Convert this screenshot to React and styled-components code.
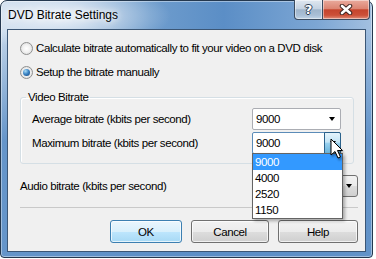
import React from 'react';
import styled, { createGlobalStyle } from 'styled-components';

const GlobalStyle = createGlobalStyle`
  html, body {
    margin: 0;
    padding: 0;
    background: #ffffff;
  }
  body {
    font-family: "Liberation Sans", Arial, sans-serif;
  }
`;

// Window frame
const Window = styled.div`
  box-sizing: border-box;
  width: 373px;
  height: 258px;
  display: flex;
  flex-direction: column;
  padding: 0 6px 5px 6px;
  border: 1px solid #24384f;
  border-radius: 7px 7px 4px 4px;
  background:
    radial-gradient(ellipse 110px 34px at 60px 15px, rgba(255, 255, 255, 0.8), rgba(255, 255, 255, 0) 100%),
    linear-gradient(180deg, rgba(91, 142, 198, 0) 0px, rgba(91, 142, 198, 0) 30px, rgba(91, 142, 198, 0.9) 140px),
    linear-gradient(90deg, #c3d6ea 0%, #a2bfde 18%, #6f9dcd 40%, #5b8ec6 60%, #7ca6d4 85%, #a3c0e0 100%);
  box-shadow: inset 0 0 0 1px rgba(255, 255, 255, 0.4);
`;

const TitleBar = styled.div`
  height: 28px;
  flex-shrink: 0;
  display: flex;
  align-items: flex-start;
`;

const Title = styled.span`
  margin: 7px 0 0 1px;
  font-size: 12px;
  color: #000;
  text-shadow: 0 0 6px #fff, 0 0 10px rgba(255, 255, 255, 0.8);
`;

const CaptionButtons = styled.div`
  margin: -1px -4px 0 auto;
  display: flex;
`;

const CaptionButton = styled.div`
  box-sizing: border-box;
  width: ${p => p.$w}px;
  height: 20px;
  display: flex;
  align-items: center;
  justify-content: center;
  border: 1px solid #3a4b60;
  border-top: none;
  border-left: ${p => (p.$close ? 'none' : '1px solid #3a4b60')};
  border-radius: ${p => (p.$close ? '0 0 4px 0' : '0 0 0 4px')};
  background: ${p =>
    p.$close
      ? 'linear-gradient(180deg, #e9aa9d 0%, #dc8573 45%, #c5442d 52%, #cc5038 80%, #e08e7a 100%)'
      : 'linear-gradient(180deg, #dfe7f0 0%, #c5d3e2 45%, #9fb5cb 52%, #a9bfd6 80%, #c2d4e6 100%)'};
  box-shadow: inset 0 0 0 1px rgba(255, 255, 255, 0.45);
`;

const HelpGlyph = styled.span`
  font-family: "DejaVu Sans", sans-serif;
  font-weight: bold;
  font-size: 13px;
  line-height: 1;
  color: #fff;
  text-shadow: -1px 0 #2c3e55, 1px 0 #2c3e55, 0 -1px #2c3e55, 0 1px #2c3e55;
`;

// Client area
const Client = styled.div`
  flex: 1;
  display: flex;
  flex-direction: column;
  border: 1px solid #3b5675;
  background: #f0f0f0;
  padding: 10px 7px 0 12px;
  font-size: 11.5px;
  letter-spacing: -0.4px;
  color: #000;
`;

const RadioRow = styled.label`
  height: 16px;
  display: flex;
  align-items: center;
  gap: 3px;
  & + & {
    margin-top: 8px;
  }
`;

const Radio = styled.span`
  box-sizing: border-box;
  width: 13px;
  height: 13px;
  border-radius: 50%;
  border: 1px solid #8e8f8f;
  background: radial-gradient(circle at 50% 50%, #ffffff 0%, #f2f2f2 45%, #d2d2d2 100%);
  display: flex;
  align-items: center;
  justify-content: center;
  &::after {
    content: '';
    width: 7px;
    height: 7px;
    border-radius: 50%;
    background: ${p =>
      p.$checked
        ? 'radial-gradient(circle at 35% 30%, #a9ddf7 0%, #3d86c6 45%, #0f3f78 100%)'
        : 'transparent'};
  }
`;

const Group = styled.fieldset`
  margin: 10px 4px 0 0;
  padding: 4px 12px 9px 11px;
  border: 1px solid #d5dfe5;
  border-radius: 3px;
  display: flex;
  flex-direction: column;
  gap: 2px;
  box-shadow: inset 1px 1px 0 #fff;
`;

const Legend = styled.legend`
  margin-left: -6px;
  padding: 0 2px;
  line-height: 14px;
`;

const FieldRow = styled.div`
  height: 22px;
  display: flex;
  align-items: center;
  justify-content: space-between;
  margin-top: ${p => p.$mt || 0}px;
`;

const Combo = styled.div`
  position: relative;
  box-sizing: border-box;
  width: 89px;
  height: 22px;
  display: flex;
  align-items: stretch;
  border: 1px solid ${p => (p.$focused ? '#5b8cb8' : p.$button ? '#707070' : '#abadb3')};
  border-radius: ${p => (p.$button ? '3px' : '2px')};
  background: ${p =>
    p.$button ? 'linear-gradient(180deg, #f2f2f2 0%, #ebebeb 50%, #dddddd 51%, #cfcfcf 100%)' : '#fff'};
`;

const ComboText = styled.span`
  flex: 1;
  display: flex;
  align-items: center;
  padding-left: 3px;
`;

const DropButton = styled.span`
  box-sizing: border-box;
  width: 17px;
  display: flex;
  align-items: center;
  justify-content: center;
  margin: ${p => (p.$pressed ? '-1px -1px -1px 0' : '0')};
  border: ${p => (p.$pressed ? '1px solid #2c628b' : 'none')};
  border-radius: ${p => (p.$pressed ? '0 2px 2px 0' : '0')};
  background: ${p =>
    p.$pressed
      ? 'linear-gradient(180deg, #e5f4fc 0%, #c4e5f6 45%, #98d1ef 52%, #68b3db 100%)'
      : 'transparent'};
  &::after {
    content: '';
    border-left: 3.5px solid transparent;
    border-right: 3.5px solid transparent;
    border-top: 4px solid #000;
  }
`;

const DropList = styled.div`
  position: absolute;
  top: 100%;
  left: -1px;
  z-index: 2;
  box-sizing: border-box;
  width: 91px;
  padding: 0;
  border: 1px solid #646464;
  background: #fff;
  box-shadow: 2px 2px 3px rgba(0, 0, 0, 0.3);
`;

const DropItem = styled.div`
  height: 16px;
  line-height: 16px;
  padding-left: 2px;
  background: ${p => (p.$active ? '#3399ff' : 'transparent')};
  color: ${p => (p.$active ? '#fff' : '#000')};
`;

const Cursor = styled.svg`
  position: absolute;
  left: 77px;
  top: 5px;
  z-index: 3;
  filter: drop-shadow(1px 2px 1px rgba(0, 0, 0, 0.35));
`;

const Separator = styled.div`
  margin-top: 10px;
  height: 1px;
  background: #c9c9c9;
`;

const ButtonRow = styled.div`
  margin-top: 12px;
  display: flex;
  justify-content: flex-end;
  gap: 9px;
`;

const Button = styled.div`
  box-sizing: border-box;
  width: ${p => p.$w}px;
  height: 23px;
  display: flex;
  align-items: center;
  justify-content: center;
  border-radius: 3px;
  border: 1px solid ${p => (p.$default ? '#3c7fb1' : '#707070')};
  background: ${p =>
    p.$default
      ? 'linear-gradient(180deg, #eaf6fd 0%, #d9f0fc 50%, #bee6fd 51%, #a7d9f5 100%)'
      : 'linear-gradient(180deg, #f2f2f2 0%, #ebebeb 50%, #dddddd 51%, #cfcfcf 100%)'};
  box-shadow: inset 0 0 0 1px rgba(255, 255, 255, 0.7);
`;

const maxOptions = ['9000', '4000', '2520', '1150'];

const App = () => {
    return (
        <>
            <GlobalStyle />
            <Window>
                <TitleBar>
                    <Title>DVD Bitrate Settings</Title>
                    <CaptionButtons>
                        <CaptionButton $w={29}>
                            <HelpGlyph>?</HelpGlyph>
                        </CaptionButton>
                        <CaptionButton $w={47} $close>
                            <svg width="14" height="11" viewBox="0 0 14 11">
                                <path d="M3 2 L11 9 M11 2 L3 9" stroke="#3b2420" strokeWidth="4.5" strokeLinecap="round" />
                                <path d="M3 2 L11 9 M11 2 L3 9" stroke="#fff" strokeWidth="2.6" strokeLinecap="round" />
                            </svg>
                        </CaptionButton>
                    </CaptionButtons>
                </TitleBar>

                <Client>
                    <RadioRow>
                        <Radio />
                        Calculate bitrate automatically to fit your video on a DVD disk
                    </RadioRow>
                    <RadioRow>
                        <Radio $checked />
                        Setup the bitrate manually
                    </RadioRow>

                    <Group>
                        <Legend>Video Bitrate</Legend>
                        <FieldRow>
                            <span>Average bitrate (kbits per second)</span>
                            <Combo>
                                <ComboText>9000</ComboText>
                                <DropButton />
                            </Combo>
                        </FieldRow>
                        <FieldRow>
                            <span>Maximum bitrate (kbits per second)</span>
                            <Combo $focused>
                                <ComboText>9000</ComboText>
                                <DropButton $pressed />
                                <DropList>
                                    {maxOptions.map((v, i) => (
                                        <DropItem key={v} $active={i === 0}>{v}</DropItem>
                                    ))}
                                </DropList>
                                <Cursor width="14" height="22" viewBox="0 0 14 22">
                                    <path
                                        d="M1 1 L1 17 L5 13.5 L8 20 L10.5 19 L7.5 12.5 L12.5 12.5 Z"
                                        fill="#fff"
                                        stroke="#000"
                                        strokeWidth="1"
                                        strokeLinejoin="miter"
                                    />
                                </Cursor>
                            </Combo>
                        </FieldRow>
                    </Group>

                    <FieldRow $mt={11}>
                        <span>Audio bitrate (kbits per second)</span>
                        <Combo $button>
                            <ComboText />
                            <DropButton />
                        </Combo>
                    </FieldRow>

                    <Separator />

                    <ButtonRow>
                        <Button $default $w={72}>OK</Button>
                        <Button $w={78}>Cancel</Button>
                        <Button $w={80}>Help</Button>
                    </ButtonRow>
                </Client>
            </Window>
        </>
    );
};

export default App;
